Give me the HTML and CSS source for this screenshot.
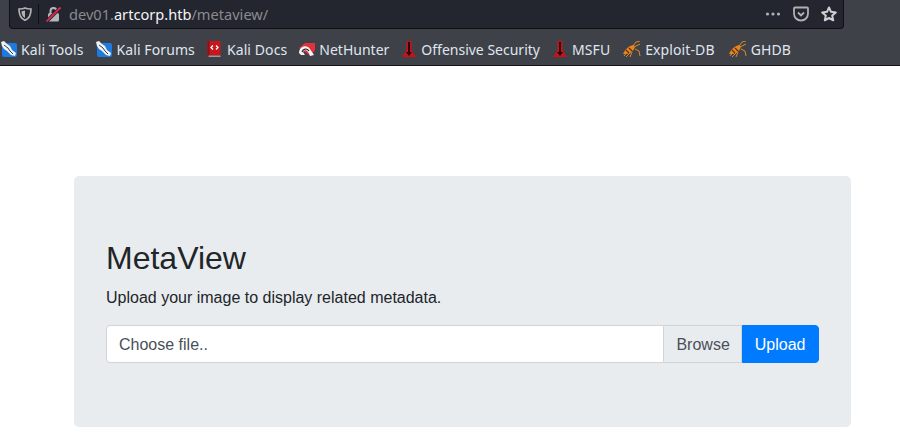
FILE: index.html
```html
<!DOCTYPE html>
<html>
  <head>
    <meta name="viewport" content="width=device-width, initial-scale=1" />
    <title>MetaView</title>
    <link rel="stylesheet" href="styles.css">
  </head>
  <body>
    <svg class="defs" width="0" height="0">
      <symbol id="ic-kali" viewBox="0 0 16 16">
        <rect x="1" y="2" width="15" height="14" rx="2" fill="#1f7ae0"/>
        <path d="M0 1 L3 0 L6 3 L9 5 L11 9 L15 12 L14 15 L10 14 L6 10 L3 8 L1 5 Z" fill="#f0f3f6"/>
        <path d="M3 4 L7 7 L9 10 L12 13" fill="none" stroke="#3a3d44" stroke-width="1"/>
      </symbol>
      <symbol id="ic-docs" viewBox="0 0 16 16">
        <rect x="0.500" y="0" width="13" height="14.500" fill="#c9161d"/>
        <rect x="0.500" y="0" width="2" height="16" fill="#8c1016"/>
        <rect x="1.500" y="14.500" width="12" height="1.500" fill="#9a9ca1"/>
        <path d="M6 4.500 L4 6.500 L6 8.500 M9 4.500 L11 6.500 L9 8.500" fill="none" stroke="#fff" stroke-width="1.300"/>
      </symbol>
      <symbol id="ic-hunter" viewBox="0 0 16 16">
        <path d="M0 7 L6 2 H16 V9 L12 15 Z" fill="#e0323a"/>
        <path d="M0 12 C0 5 8 3 11 8 L15 14 L11 15 C9 9 6 8 4 11 L6 14 H2 Z" fill="#f4f4f4"/>
        <path d="M3 11 C4 7.500 8 7 10 10" fill="none" stroke="#24262c" stroke-width="1.200"/>
      </symbol>
      <symbol id="ic-offsec" viewBox="0 0 16 16">
        <path d="M5.500 0 H10.500 V9 L15 16 H1 L5.500 9 Z" fill="#c8121a"/>
        <path d="M7 1 H9 V11 H11 L8 15 L5 11 H7 Z" fill="#2b0507"/>
      </symbol>
      <symbol id="ic-exploit" viewBox="0 0 18 16">
        <path d="M1 15 L6 9 M3 16 L8 11 M7 16 L9 11 M10 5 L13 1 L17 0 M11 6 L17 3 M12 8 L16 10 L17 15" fill="none" stroke="#d98a2b" stroke-width="1"/>
        <path d="M0 13 C2 8 7 4 11 4 C13 7 10 11 4 13 Z" fill="#e8851a"/>
        <path d="M3 9 L6 12 M6 7 L9 10" stroke="#5a3208" stroke-width="1.200"/>
      </symbol>
    </svg>

    <header class="chrome">
      <div class="urlbar">
        <svg class="shield" width="14" height="14" viewBox="0 0 14 14">
          <path d="M7 1 C9 2 11 2 13 2 C13 8 11.500 11.500 7 13.300 C2.500 11.500 1 8 1 2 C3 2 5 2 7 1 Z" fill="none" stroke="#b1b1b3" stroke-width="1.700"/>
          <path d="M7 3.500 V11 C5 10 3.500 8 3.500 4.200 Z" fill="#b1b1b3"/>
        </svg>
        <span class="sep"></span>
        <svg class="lock" width="15" height="16" viewBox="0 0 15 16">
          <path d="M4.500 7 V5 C4.500 1 10.500 1 10.500 5 V7" fill="none" stroke="#b6b6b8" stroke-width="2"/>
          <rect x="2" y="7" width="11" height="8.500" rx="1.500" fill="#b6b6b8"/>
          <path d="M0.500 15.500 L14.500 1.500" stroke="#23252f" stroke-width="3.600"/>
          <path d="M0.500 15.500 L14.500 1.500" stroke="#e22850" stroke-width="1.800"/>
        </svg>
        <div class="url">dev01.<span class="host">artcorp.htb</span>/metaview/</div>
        <div class="url-actions">
          <svg width="16" height="16" viewBox="0 0 16 16" fill="#b1b1b3">
            <circle cx="2.500" cy="8" r="1.600"/><circle cx="8" cy="8" r="1.600"/><circle cx="13.500" cy="8" r="1.600"/>
          </svg>
          <svg width="16" height="16" viewBox="0 0 16 16">
            <path d="M2 1.500 H14 C14.600 1.500 15 1.900 15 2.500 V7.500 C15 11.500 12 14.500 8 14.500 C4 14.500 1 11.500 1 7.500 V2.500 C1 1.900 1.400 1.500 2 1.500 Z" fill="none" stroke="#b1b1b3" stroke-width="1.800"/>
            <path d="M5 6.500 L8 9.500 L11 6.500" fill="none" stroke="#b1b1b3" stroke-width="1.800"/>
          </svg>
          <svg width="16" height="16" viewBox="0 0 16 16">
            <path d="M8 1.500 L10 5.800 L14.800 6.400 L11.200 9.600 L12.200 14.300 L8 12 L3.800 14.300 L4.800 9.600 L1.200 6.400 L6 5.800 Z" fill="none" stroke="#d0d0d2" stroke-width="2" stroke-linejoin="round"/>
          </svg>
        </div>
      </div>
      <nav class="bookmarks">
        <a class="mark mark-wide"><svg width="16" height="16"><use href="#ic-kali"/></svg>Kali Tools</a>
        <a class="mark"><svg width="16" height="16"><use href="#ic-kali"/></svg>Kali Forums</a>
        <a class="mark"><svg width="16" height="16"><use href="#ic-docs"/></svg>Kali Docs</a>
        <a class="mark mark-plain"><svg width="16" height="16"><use href="#ic-hunter"/></svg>NetHunter</a>
        <a class="mark mark-plain"><svg width="16" height="16"><use href="#ic-offsec"/></svg>Offensive Security</a>
        <a class="mark mark-wide"><svg width="16" height="16"><use href="#ic-offsec"/></svg>MSFU</a>
        <a class="mark mark-exploit"><svg width="18" height="16"><use href="#ic-exploit"/></svg>Exploit-DB</a>
        <a class="mark"><svg width="18" height="16"><use href="#ic-exploit"/></svg>GHDB</a>
      </nav>
    </header>

    <main class="page">
      <section class="jumbotron">
        <h1>MetaView</h1>
        <p>Upload your image to display related metadata.</p>
        <form class="input-group">
          <div class="file-label">Choose file..</div>
          <div class="browse">Browse</div>
          <button class="upload" type="button">Upload</button>
        </form>
      </section>
    </main>
  </body>
</html>
```

FILE: styles.css
```css
html, body {
  margin: 0;
  padding: 0;
}

body {
  height: 437px;
  overflow: hidden;
  background: #fff;
  color: #212529;
  font-family: "Liberation Sans", Arial, sans-serif;
  font-size: 16px;
}

.defs {
  display: block;
  height: 0;
}

/* Browser toolbar */
.chrome {
  height: 65px;
  background: #3f4149;
  border-bottom: 1px solid #141418;
  font-family: "Noto Sans", sans-serif;
}

.urlbar {
  display: flex;
  align-items: center;
  box-sizing: border-box;
  height: 29px;
  margin: 0 56px 0 9px;
  padding: 0 6px 0 8px;
  background: #23252f;
  border: 1px solid #101014;
  border-top: 0;
  border-radius: 0 0 4px 4px;
}

.sep {
  width: 1px;
  height: 20px;
  margin: 0 7px 0 6px;
  background: #0f1014;
}

.url {
  flex: 1;
  margin-left: 8px;
  color: #8a8b90;
  font-size: 14.6px;
}

.host {
  color: #f4f4f6;
}

.url-actions {
  display: flex;
  align-items: center;
  gap: 12px;
}

.bookmarks {
  display: flex;
  align-items: center;
  height: 40px;
  padding-left: 1px;
}

.mark {
  display: flex;
  align-items: center;
  gap: 4px;
  margin-right: 12px;
  color: #dfe6ee;
  font-size: 14px;
  letter-spacing: .1px;
}

.mark-wide {
  margin-right: 13px;
}

.mark-plain {
  letter-spacing: 0;
}

.mark-exploit {
  margin-right: 14px;
}

/* Page */
.page {
  padding: 109.6px 49px 0 74px;
}

.jumbotron {
  padding: 63.4px 32px;
  background: #e9ecef;
  border-radius: 5px;
}

h1 {
  margin: 0 0 9px;
  font-size: 32px;
  font-weight: 500;
  line-height: 1.2;
}

p {
  margin: 0 0 15px;
  line-height: 24px;
}

.input-group {
  display: flex;
  height: 38px;
}

.file-label {
  flex: 1;
  padding: 0 12px;
  color: #495057;
  line-height: 37px;
  background: #fff;
  border: 1px solid #ced4da;
  border-radius: 4px 0 0 4px;
}

.browse {
  padding: 0 11.5px 0 12.5px;
  color: #495057;
  line-height: 37px;
  background: #e9ecef;
  border: 1px solid #ced4da;
  border-left: 0;
}

.upload {
  padding: 1px 12.500px 0 11.500px;
  color: #fff;
  font: inherit;
  background: #007bff;
  border: 1px solid #007bff;
  border-radius: 0 4px 4px 0;
}
```
